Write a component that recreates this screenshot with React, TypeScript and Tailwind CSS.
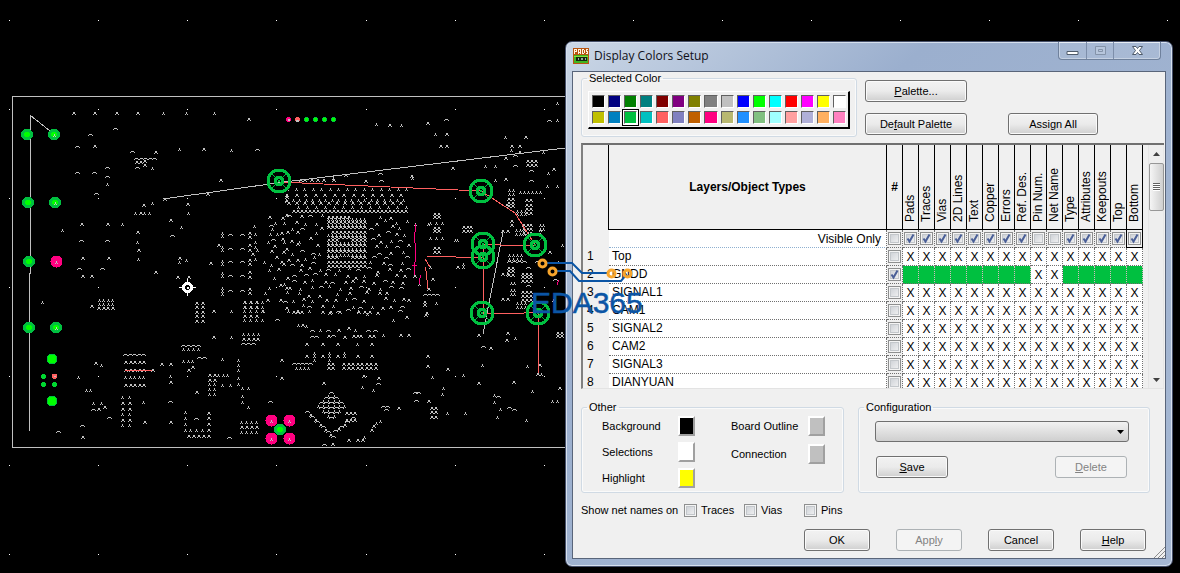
import React from "react";

type Kind = "full" | "thin" | "flat";

const px = (x: number, y: number, w = 1, h = 1) => `M${x} ${y}h${w}v${h}h${-w}z`;

const glyph: Record<Kind, (x: number, y: number) => string> = {
  full: (x, y) => px(x, y - 1, 2, 2) + px(x - 1, y + 1) + px(x + 2, y + 1),
  thin: (x, y) => px(x, y - 1, 1, 2) + px(x - 1, y + 1) + px(x + 1, y + 1),
  flat: (x, y) => px(x - 1, y - 1, 3, 1) + px(x - 2, y) + px(x + 2, y),
};

const plot = (kind: Kind, points: string) =>
  points
    .trim()
    .split(/\s+/)
    .map((p) => {
      const [x, y] = p.split(",").map(Number);
      return glyph[kind](x, y);
    })
    .join("");

const grid = (kind: Kind, xs: number[], ys: number[]) =>
  ys.flatMap((y) => xs.map((x) => glyph[kind](x, y))).join("");

const steps = (from: number, to: number, step: number) => {
  const out: number[] = [];
  for (let v = from; v <= to; v += step) out.push(Math.round(v));
  return out;
};

const FULL = `73,113 94,113 116,113 137,113 248,119 94,146 155,152 136,162 140,162 144,161 144,165 203,149 220,180 207,194
164,199 143,205 187,204 140,213 170,220 81,224 107,224 137,232 138,250 82,258 108,258 179,258 210,263 281,233 218,245
274,246 286,249 252,254 281,262 286,197 286,201 286,215 82,276 91,276 155,272 177,277 188,277 280,285 286,288 286,308
280,300 267,300 91,306 213,311 262,311 213,337 95,363 161,364 170,364 170,382 152,370 188,370 192,367 281,360 281,378
196,392 104,407 98,409 82,437 144,422 170,422 389,125 427,123 446,134 440,146 446,146 525,137 511,146 519,146 519,152
505,158 553,169 505,179 365,181 323,383 363,376 378,378 302,325 338,330 348,328 344,337 353,336 357,336
360,336 328,336 369,336 373,336 400,335 408,335 306,344 322,344 337,344 371,344 306,356 322,356 337,356 357,356 371,356
427,356 427,366 447,369 428,401 398,408 478,383 507,333 506,340 490,348 478,335 539,365 537,374 559,388 513,382 348,440
357,440 362,440 332,444 408,300 406,317 424,302 424,305 426,313 425,315 414,276 432,279 428,289 457,267 371,430 373,426
411,176 345,175 452,168 506,205 549,252 553,300`;

const THIN = `163,113 186,113 214,113 152,168 179,149 231,150 107,184 152,203 188,213 181,227 122,224 62,230 137,242
138,259 179,262 186,260 255,234 270,234 255,242 268,242 284,242 255,247 257,250 255,259 264,262 254,226 269,270 269,288
265,293 42,302 231,311 231,337 101,365 183,361 188,361 192,361 222,359 222,385 230,385 242,388 248,388 242,396 242,402
248,407 78,377 86,390 90,390 93,403 101,403 143,402 376,124 401,125 435,134 557,103 557,120 505,137 511,150 543,152
485,166 495,166 548,173 547,186 557,186 495,180 412,178 333,178 298,325 306,326 320,330 355,330 383,335 357,344 344,353
344,356 432,377 463,375 443,388 442,394 362,387 373,390 482,365 515,338 527,366 532,391 500,409 497,417 526,420 552,401
557,401 447,413 465,413 393,320 436,303 419,284 430,267 463,264 463,267 457,240 455,240 415,224 428,224 494,395 494,402
364,437 376,423 380,421 541,374 170,376 562,245 558,262`;

const FLAT = `115,129 90,135 77,147 132,152 137,168 257,150 107,168 77,173 94,173 107,177 96,194 172,236 81,241 107,241
79,269 102,269 271,226 277,320 199,358 204,358 270,402 170,402 109,418 82,426 58,432 196,419 229,438 93,410 446,120
549,121 515,156 515,166 531,171 531,181 380,174 381,181 312,331 328,331 368,331 375,331 312,337 316,337 333,336
378,384 415,393 418,393 416,401 383,407 387,407 386,410 483,347 498,397 509,408 514,410 324,445 537,262 555,280`;

function chipField() {
  const out: string[] = [];
  const kinds: Kind[] = ["thin", "full", "flat", "full"];
  const hash = (a: number, b: number) => {
    const v = Math.sin(a * 127.1 + b * 311.7) * 43758.5453;
    return v - Math.floor(v);
  };
  for (let r = 0; r < 17; r++) {
    const y = 216 + r * 6;
    const left = 271 + (y > 262 ? (y - 262) * 0.35 : 0);
    for (let c = 0; c < 14; c++) {
      const x = Math.round(left + c * 10 + (r % 2) * 5 + hash(r, c) * 4 - 2);
      if (x > 408 || (x > 322 && x < 370 && y < 268)) continue;
      if (hash(c, r + 40) < 0.1) continue;
      out.push(glyph[kinds[Math.floor(hash(r + 9, c + 5) * 4)]](x, y + Math.round(hash(c + 3, r) * 4) - 2));
    }
  }
  return out.join("");
}

function diamond() {
  const out: string[] = [];
  for (let i = 0; i < 6; i++)
    for (let j = 0; j < 6; j++)
      out.push(glyph[(i + j) % 2 ? "thin" : "flat"](331 + Math.round((i - j) * 2.6), 393 + Math.round((i + j) * 2.5)));
  return out.join("");
}

function chain(x1: number, y1: number, x2: number, y2: number, n: number) {
  return Array.from({ length: n }, (_, i) =>
    glyph[i % 2 ? "full" : "flat"](
      Math.round(x1 + ((x2 - x1) * i) / (n - 1)),
      Math.round(y1 + ((y2 - y1) * i) / (n - 1))
    )
  ).join("");
}

const MARKS = [
  plot("full", FULL),
  plot("thin", THIN),
  plot("flat", FLAT),
  grid("flat", steps(136, 154, 4.5), [159]),
  grid("thin", [135, 144, 149], [213]),
  grid("thin", [222], [233, 236, 247, 250, 261, 264, 273, 276, 288, 291, 294]),
  grid("full", [249], [233, 237, 245, 250, 260, 264, 272, 277, 289, 293]),
  grid("flat", [230, 242], [235, 249, 262, 276, 291]),
  grid("thin", [99, 103, 108, 112], [300, 304]),
  grid("full", [98, 103, 107, 112], [308]),
  grid("full", [196, 202], [303, 307, 312, 316, 321]),
  grid("full", [244, 250, 256], [302, 307, 316]),
  grid("thin", [244, 250, 256, 262], [302, 307, 311, 320]),
  grid("thin", [243, 248, 253, 258], [334]),
  grid("full", [243, 248, 253, 257], [339]),
  grid("flat", [243, 248, 253], [344]),
  grid("flat", [183, 188, 193, 198], [346]),
  grid("thin", [183, 188, 193, 198], [349]),
  grid("thin", [238], [360, 365, 370, 378, 384]),
  grid("flat", steps(125, 144, 4.5), [355]),
  grid("full", steps(125, 144, 4.5), [362, 370, 385]),
  grid("thin", steps(125, 144, 4.5), [377]),
  grid("full", [209, 214], [375, 380]),
  grid("thin", [209, 214], [384, 389, 394]),
  grid("thin", [218, 223, 227], [375]),
  grid("full", [122, 129], [403, 409, 420]),
  grid("thin", [122, 129], [397, 414, 425]),
  grid("thin", [185], [412, 418, 424, 430]),
  grid("full", [208], [413, 418, 424, 430, 436]),
  grid("thin", [190, 196, 202], [430]),
  grid("full", [188, 193, 198, 203], [436]),
  grid("thin", [241, 246, 251, 256], [422, 432]),
  grid("full", [241, 246, 251, 256], [427]),
  grid("flat", steps(294, 311, 4), [364]),
  grid("thin", steps(296, 308, 4), [368]),
  grid("full", [328, 332], [364, 368]),
  grid("thin", [314, 329], [353, 356, 360]),
  grid("full", steps(343, 377, 4.5), [364, 368]),
  grid("full", [431, 435], [408, 412, 417]),
  grid("full", [557, 561], [333, 336]),
  grid("flat", steps(425, 438, 4), [295]),
  grid("thin", steps(287, 406, 8.5), [189]),
  grid("full", steps(286, 405, 9.5), [195]),
  grid("thin", steps(286, 405, 6.5), [200]),
  grid("full", steps(288, 405, 8), [203]),
  grid("thin", steps(298, 406, 9), [207]),
  grid("full", steps(293, 406, 4), [211]),
  grid("full", [300, 304, 311, 317, 323, 333], [180]),
  grid("full", steps(328, 350, 4), [217, 222, 227]),
  grid("full", steps(332, 366, 4), [222, 227, 232, 237]),
  grid("thin", steps(328, 366, 4), [219, 225, 235, 243, 249, 255]),
  grid("full", steps(328, 366, 4), [245, 251, 262, 266]),
  grid("full", [328, 332, 336, 352, 356, 360, 364], [240, 257]),
  grid("full", [434, 438], [214, 217, 228, 231, 248, 252]),
  grid("thin", [430, 436, 442], [223, 238]),
  grid("full", [463, 467, 470], [227, 231]),
  grid("full", [527, 531, 535], [161, 165]),
  grid("thin", [509, 513], [190, 194]),
  grid("thin", steps(520, 541, 4), [192]),
  grid("full", [508, 512], [199, 203, 206]),
  grid("full", [526, 530], [200, 205, 209, 213]),
  grid("thin", [517, 521, 525], [211, 214]),
  grid("full", [511], [221, 225]),
  grid("full", [523, 527, 530], [225, 229, 233]),
  grid("thin", [516, 520, 524, 540], [230, 234]),
  grid("thin", [540, 543], [225, 229]),
  grid("full", [502, 507], [231]),
  grid("flat", [509, 514, 519, 524], [262]),
  grid("thin", [509, 513, 517, 521], [255, 259]),
  grid("full", [508, 512], [268, 271, 275]),
  grid("full", [522, 526, 530], [274, 277, 281]),
  grid("flat", [528], [268, 286]),
  grid("full", [502, 507], [274, 299]),
  grid("thin", [511, 514], [283, 290, 294]),
  grid("full", [522, 526, 530], [292, 296, 300]),
  grid("thin", [517, 521, 525], [303, 307]),
  grid("full", [293, 297, 301, 322, 330, 339, 358, 364, 369], [312]),
  chipField(),
  diamond(),
  chain(307, 412, 333, 437, 11),
  chain(335, 431, 353, 418, 7),
  grid("full", [346, 350, 354], [413, 420]),
].join("");

const DOTS = [20, 109, 198, 287, 376, 465, 554]
  .flatMap((y) => [9, 98, 187, 276, 366, 455, 544, 633, 722, 811, 900, 989, 1078, 1167].map((x) => px(x, y)))
  .join("");

const RINGS = [
  [279, 181],
  [481, 191],
  [483, 244],
  [483, 257],
  [535, 245],
  [482, 313],
  [538, 313],
];

const PADS = [
  [27, 134],
  [54, 134],
  [28, 202],
  [55, 202],
  [29, 261],
  [29, 327],
  [56, 327],
  [280, 429],
];

const PINK_PADS = [
  [56, 261],
  [271, 420],
  [289, 420],
  [271, 438],
  [289, 438],
];

function Board() {
  return (
    <svg className="absolute inset-0 h-full w-full" shapeRendering="crispEdges" aria-hidden="true">
      <path d="M565 96.5H12.5V447.5H565" fill="none" stroke="#c0c0c0" />
      <path d={MARKS} fill="#c0c0c0" />
      <path d={DOTS} fill="#ffffff" />
      <g fill="none" stroke="#c0c0c0">
        <path d="M50 131L30.5 115.5V273L29.5 274V431" />
        <path d="M163 199L284 182L565 148" />
        <path d="M503 232L483 334" />
      </g>
      <g fill="none" stroke="#ff6060">
        <path d="M280 182L345 185L481 191L515 213L535 245" />
        <path d="M483 244.5H501M501 245.5H535M427 256L484 258M483.5 244V313M482 313.5H510L538 312.5M538.5 313V373M425.5 267L428 289M425 259L430 267" />
        <path d="M125 370.5H152" />
      </g>
      <path d="M415.5 224V232M414.5 232V243M415.5 243V262M414.5 262V275M420.5 275L419 284M412 265h5M558.5 280L557 285" fill="none" stroke="#ff0080" />
      {RINGS.map(([x, y]) => (
        <g key={`${x}-${y}`} fill="none" stroke="#00c040">
          <circle cx={x} cy={y} r="11" strokeWidth="3" />
          <circle cx={x} cy={y} r="4" strokeWidth="3" />
          <path d={`M${x - 8} ${y - 8}l16 16M${x + 8} ${y - 8}l-16 16`} />
        </g>
      ))}
      {PADS.map(([x, y]) => (
        <g key={`${x}-${y}`}>
          <circle cx={x} cy={y + 0.5} r="6" fill="#00c040" />
          <circle cx={x} cy={y + 0.5} r="3" fill="#00ff00" />
        </g>
      ))}
      {PINK_PADS.map(([x, y]) => (
        <circle key={`${x}-${y}`} cx={x + 0.5} cy={y + 0.5} r="6" fill="#ff0080" />
      ))}
      {[359, 401].map((y) => (
        <circle key={y} cx="52" cy={y} r="5" fill="#00ff00" stroke="#00c040" />
      ))}
      <path d="M42 374h3v1h1v3h-1v1h-3v-1h-1v-3h1zM42 382h3v1h1v3h-1v1h-3v-1h-1v-3h1zM53 382h3v1h1v3h-1v1h-3v-1h-1v-3h1z" fill="#00d830" />
      <path d="M52 374h5v4h-1v1h-3v-1h-1z" fill="#ff6060" />
      {["#ff0080", "#ff6060", "#00c040", "#00c040", "#00c040", "#00c040"].map((c, i) => (
        <path key={i} d={`M${287 + i * 9} 117h3v1h1v3h-1v1h-3v-1h-1v-3h1z`} fill={c} />
      ))}
      <path d="M305 118h3v3h-3zM314 118h3v3h-3zM323 118h3v3h-3zM332 118h3v3h-3z" fill="#00ff00" />
      <path
        d={plot("thin", "54,135 55,203 56,262 56,328 271,421 289,421 271,439 289,439") + px(288, 119, 2, 2) + px(296, 120, 3, 2) + px(54, 376, 2, 1)}
        fill="#c0c0c0"
      />
      <circle cx="187.5" cy="287.5" r="4" fill="none" stroke="#ffffff" strokeWidth="3" />
      <path d="M187.5 279v5M187.5 291v5M179 287.5h5M191 287.5h5M187 287h1v1h-1z" stroke="#ffffff" />
    </svg>
  );
}

function Watermark() {
  return (
    <svg className="pointer-events-none absolute inset-0 h-full w-full" aria-hidden="true">
      <g fill="none" stroke="#0b55a5" strokeWidth="2">
        <path d="M546 263H572L582 273H608" />
        <path d="M556 271H570L579 281H621L626 275" />
      </g>
      <g fill="none" stroke="#f7a52c" strokeWidth="3">
        <circle cx="542.5" cy="263.5" r="3.500" />
        <circle cx="552.5" cy="271.5" r="3.500" />
        <circle cx="611.5" cy="273.5" r="3.500" />
        <circle cx="627.5" cy="273.5" r="3.500" />
      </g>
      <text x="531" y="313" fontFamily="'Liberation Sans', Arial, sans-serif" fontSize="30" fill="#0b55a5" stroke="#0b55a5" strokeWidth="0.5">
        EDA365
      </text>
    </svg>
  );
}

function Check({ label, id, checked = false, focus = false }: { label?: string; id?: string; checked?: boolean; focus?: boolean }) {
  return (
    <span className="relative block size-[13px] shrink-0">
      <input
        id={id}
        type="checkbox"
        aria-label={label}
        defaultChecked={checked}
        className="peer block size-[13px] appearance-none border border-[#8e8f8f] bg-linear-to-br from-[#c8ccd2] to-[#f6f6f6] shadow-[inset_0_0_0_1px_#f4f4f4,inset_0_0_0_2px_#c3c7cb]"
      />
      <svg viewBox="0 0 13 13" className="pointer-events-none absolute inset-0 hidden size-[13px] peer-checked:block" aria-hidden="true">
        <path d="M3.500 6.500L5.500 9.500L9.500 2.500" fill="none" stroke="#4a5f97" strokeWidth="2" />
      </svg>
      {focus && <span className="pointer-events-none absolute -inset-x-[2px] -inset-y-[3px] border border-black" />}
    </span>
  );
}

function Button({ children, className = "", disabled = false }: { children: React.ReactNode; className?: string; disabled?: boolean }) {
  const tone = disabled
    ? "border-[#adb2b5] bg-[#f4f4f4] text-[#838383]"
    : "border-[#707070] bg-linear-to-b from-[#f2f2f2] from-0% via-[#ebebeb] via-50% to-[#cfcfcf] text-black shadow-[inset_0_0_0_1px_#fafafa]";
  return (
    <button type="button" disabled={disabled} className={`h-[22px] shrink-0 rounded-[3px] border text-center leading-[18px] ${tone} ${className}`}>
      {children}
    </button>
  );
}

const PALETTE = [
  "#000000", "#000080", "#008000", "#008080", "#800000", "#800080", "#808000", "#808080",
  "#c0c0c0", "#0000ff", "#00ff00", "#00ffff", "#ff0000", "#ff00ff", "#ffff00", "#ffffff",
  "#c0c000", "#0080c0", "#00c040", "#00c0c0", "#ff6060", "#8080c0", "#c06000", "#ff0080",
  "#b8b870", "#2090ff", "#80c080", "#a0ffff", "#ffa0a0", "#b0b0d8", "#ffb060", "#ff80c0",
];

const COLUMNS = [
  "Pads", "Traces", "Vias", "2D Lines", "Text", "Copper", "Errors", "Ref. Des.",
  "Pin Num.", "Net Name", "Type", "Attributes", "Keepouts", "Top", "Bottom",
];

const LAYERS = ["Top", "GNDD", "SIGNAL1", "CAM1", "SIGNAL2", "CAM2", "SIGNAL3", "DIANYUAN"];

const hiddenColumn = (i: number) => i === 8 || i === 9;

function Group({ title, className = "", children }: { title: string; className?: string; children: React.ReactNode }) {
  return (
    <fieldset className={`min-w-0 rounded-[3px] border border-[#d0dae4] shadow-[inset_0_0_0_1px_#fafafa] ${className}`}>
      <legend className="ml-[5px] px-[2px] leading-[12px]">{title}</legend>
      {children}
    </fieldset>
  );
}

function ColorRow({ label, color }: { label: string; color: string }) {
  return (
    <div className="flex h-[26px] items-center justify-between">
      <span>{label}</span>
      <button
        type="button"
        aria-label={label}
        className={`h-5 w-[17px] border-t-2 border-r-2 border-b-2 border-l-2 border-t-white border-r-[#a0a0a0] border-b-[#a0a0a0] border-l-white ${color}`}
      />
    </div>
  );
}

function LayerTable() {
  return (
    <div className="mt-[6px] flex h-[246px] overflow-hidden border-t-2 border-l-2 border-t-[#707070] border-l-[#808080] border-b border-b-[#e3e3e3] bg-[#f0f0f0]">
      <div className="min-w-0 flex-1 overflow-hidden">
        <table className="w-full table-fixed border-separate border-spacing-0 bg-white text-[12px] leading-[14px]">
          <colgroup>
            <col className="w-[26px]" />
            <col />
            <col className="w-4" />
            {COLUMNS.map((c) => (
              <col key={c} className="w-4" />
            ))}
          </colgroup>
          <thead>
            <tr className="h-[84px] bg-[#f0f0f0]">
              <th className="border-r border-black" />
              <th className="border-r border-b border-black text-center font-bold">Layers/Object Types</th>
              <th className="border-r border-b border-black text-center font-bold">#</th>
              {COLUMNS.map((c) => (
                <th key={c} className="border-r border-b border-black p-0 align-bottom font-normal">
                  <span className="block h-[84px] w-[15px] rotate-180 pt-[7px] text-left leading-[15px] whitespace-nowrap [writing-mode:vertical-rl]">{c}</span>
                </th>
              ))}
            </tr>
          </thead>
          <tbody>
            <tr className="h-[18px]">
              <td className="bg-[#f0f0f0] p-0" />
              <td className="border-r border-b border-dotted border-r-[#707070] border-b-[#8fb0d0] p-0 pr-[5px] text-right">Visible Only</td>
              <td className="border-r border-b border-dotted border-[#707070] bg-[#f0f0f0] p-0">
                <span className="flex justify-center">
                  <Check label="Visible only, all" />
                </span>
              </td>
              {COLUMNS.map((c, i) => (
                <td key={c} className="border-r border-b border-dotted border-[#707070] bg-[#f0f0f0] p-0">
                  <span className="flex justify-center">
                    <Check label={`Visible only, ${c}`} checked={!hiddenColumn(i)} focus={c === "Bottom"} />
                  </span>
                </td>
              ))}
            </tr>
            {LAYERS.map((layer, row) => (
              <tr key={layer} className="h-[18px]">
                <td className="bg-[#f0f0f0] p-0 pb-[2px] pl-1 text-left">{row + 1}</td>
                <td className="border-r border-b border-dotted border-[#707070] p-0 pb-px pl-[3px] text-left">{layer}</td>
                <td className="border-r border-b border-dotted border-[#707070] bg-[#f0f0f0] p-0">
                  <span className="flex justify-center">
                    <Check label={layer} checked={row === 1} />
                  </span>
                </td>
                {COLUMNS.map((c, i) => {
                  const filled = row === 1 && !hiddenColumn(i);
                  return (
                    <td
                      key={c}
                      className={`border-r border-b border-dotted p-0 text-center ${filled ? "border-r-[#d8b8c0] border-b-[#707070] bg-[#00c040]" : "border-[#707070] bg-white"}`}
                    >
                      {filled ? "" : "X"}
                    </td>
                  );
                })}
              </tr>
            ))}
          </tbody>
        </table>
      </div>
      <div className="ml-[5px] flex w-4 shrink-0 flex-col items-center border-x border-[#e6e6e6] bg-[#eeeeee]">
        <svg className="h-[18px] w-[7px] shrink-0" viewBox="0 0 7 18" aria-hidden="true">
          <path d="M0 11L3.500 7L7 11z" fill="#404040" />
        </svg>
        <div className="flex h-[48px] w-[15px] shrink-0 flex-col items-center justify-center rounded-[2px] border border-[#979797] bg-linear-to-r from-[#f5f5f5] to-[#cfcfcf]">
          <span className="h-[2px] w-[7px] border-b border-white bg-[#606060]" />
          <span className="h-[2px] w-[7px] border-b border-white bg-[#606060]" />
          <span className="h-[2px] w-[7px] border-b border-white bg-[#606060]" />
          <span className="h-[2px] w-[7px] border-b border-white bg-[#606060]" />
        </div>
        <svg className="mt-auto h-[17px] w-[7px] shrink-0" viewBox="0 0 7 17" aria-hidden="true">
          <path d="M0 7h7L3.500 11z" fill="#404040" />
        </svg>
      </div>
    </div>
  );
}

function AppIcon() {
  return (
    <svg className="size-4" viewBox="0 0 16 16" shapeRendering="crispEdges" aria-hidden="true">
      <path d="M0 0h16v16H0z" fill="#b85410" />
      <path
        d="M1.500 1v5M1 1.500h2M1 3.500h2M3.500 1v3M5.500 2v4M7.500 2v4M5 1.500h3M5 4.500h3M9.500 1v5M9 1.500h2M9 5.500h2M11.500 2v3M13 1.500h2M13 3.500h2M13 5.500h2M13.500 1v3M14.500 3v3"
        stroke="#fff4e0"
        fill="none"
      />
      <path d="M1 7h14v8H1z" fill="#3fb520" />
      <path d="M1 8h14v1H1z" fill="#8be03c" />
      <path d="M3 9h11v4H3z" fill="#14280c" />
      <path d="M5 10h1v2H5zM8 10h2v2H8zM12 10h1v2h-1z" fill="#9aa6a0" />
    </svg>
  );
}

function TitleBar() {
  return (
    <header className="flex h-[29px] items-start px-[5px]">
      <div className="-ml-[5px] mt-[6px] flex items-center gap-[5px] pl-[1px]">
        <AppIcon />
        <h1 className="font-['Open_Sans','Noto_Sans',sans-serif] text-[12px] leading-4 text-[#101018]">Display Colors Setup</h1>
      </div>
      <div className="ml-auto flex h-[18px] rounded-b-[4px] border border-t-0 border-[#6f819c] bg-white/10 shadow-[inset_0_0_0_1px_rgba(255,255,255,0.35)]">
        <button type="button" aria-label="Minimize" className="flex w-[28px] items-center justify-center border-r border-[#7d8eaa]">
          <svg className="h-[13px] w-[13px]" viewBox="0 0 13 13" aria-hidden="true">
            <path d="M1 7.500h11v3H1z" fill="#ffffff" stroke="#4f5b6b" />
          </svg>
        </button>
        <button type="button" aria-label="Maximize" disabled className="flex w-[27px] items-center justify-center border-r border-[#7d8eaa]">
          <svg className="h-[13px] w-[13px]" viewBox="0 0 13 13" aria-hidden="true">
            <path d="M1.500 2.500h10v8h-10zM4.500 5.500h4v2h-4z" fill="#c2cfe1" fillOpacity="0.600" stroke="#8493a9" />
          </svg>
        </button>
        <button type="button" aria-label="Close" className="flex w-[46px] items-center justify-center">
          <svg className="h-[13px] w-[13px]" viewBox="0 0 13 13" aria-hidden="true">
            <path d="M1.500 2.500h3.500l1.500 2l1.500-2h3.500l-3 4l3 4H8l-1.500-2l-1.500 2H1.500l3-4z" fill="#ffffff" stroke="#4f5b6b" />
          </svg>
        </button>
      </div>
    </header>
  );
}

function NetName({ id, label }: { id: string; label: string }) {
  return (
    <div className="flex w-[60px] items-center gap-1">
      <Check id={id} />
      <label htmlFor={id}>{label}</label>
    </div>
  );
}

export default function App() {
  return (
    <main className="relative flex min-h-screen items-start justify-end overflow-hidden bg-black pt-[41px] pr-[7px] pb-1 font-['Liberation_Sans',Arial,sans-serif] text-[11px] text-black">
      <Board />
      <section
        aria-label="Display Colors Setup"
        className="relative w-[608px] max-w-full rounded-[7px] border border-[#46506a] bg-linear-to-br from-[#cbd7e6] from-0% via-[#9bafce] via-30% to-[#a6b8d3] px-[6px] pb-[7px] shadow-[inset_0_0_0_1px_#d6e0ee]"
      >
        <TitleBar />
        <div className="relative border border-[#59657a] bg-[#f0f0f0] pr-px pb-[7px] pl-2">
          <div className="flex">
            <Group title="Selected Color" className="h-[65px] w-[276px]">
              <div className="mx-[6px] mt-[7px] grid grid-cols-16 gap-x-[3px] gap-y-[3px] border-t border-r-2 border-b-2 border-l border-t-white border-r-black border-b-black border-l-white py-[3px] pr-[2px] pl-[3px]">
                {PALETTE.map((c, i) => (
                  <button
                    key={i}
                    type="button"
                    aria-label={c}
                    className={`h-[13px] border-t border-l border-r border-b border-t-[#606060] border-l-[#606060] border-r-white border-b-white ${i === 18 ? "shadow-[0_0_0_1px_#fff,0_0_0_2px_#000]" : ""}`}
                    style={{ backgroundColor: c }}
                  />
                ))}
              </div>
            </Group>
            <div className="ml-2 flex flex-col gap-[11px] pt-2">
              <Button className="w-[102px]">
                <u>P</u>alette...
              </Button>
              <Button className="w-[102px]">
                De<u>f</u>ault Palette
              </Button>
            </div>
            <Button className="mt-[41px] ml-[41px] w-[90px]">Assign All</Button>
          </div>

          <LayerTable />

          <div className="mt-3 flex gap-[14px] pr-[14px]">
            <Group title="Other" className="h-[92px] w-[263px]">
              <div className="flex gap-9 pr-[18px] pl-5">
                <div className="w-[93px]">
                  <ColorRow label="Background" color="bg-black" />
                  <ColorRow label="Selections" color="bg-white" />
                  <ColorRow label="Highlight" color="bg-[#ffff00]" />
                </div>
                <div className="w-[94px] space-y-[2px]">
                  <ColorRow label="Board Outline" color="bg-[#c0c0c0]" />
                  <ColorRow label="Connection" color="bg-[#c0c0c0]" />
                </div>
              </div>
            </Group>
            <Group title="Configuration" className="h-[92px] flex-1">
              <div className="px-4">
                <div className="relative mt-2 pr-1">
                  <select
                    aria-label="Configuration"
                    defaultValue=""
                    className="block h-[21px] w-full appearance-none rounded-[3px] border border-[#707070] bg-linear-to-b from-[#f2f2f2] to-[#cfcfcf] px-2"
                  >
                    <option value=""></option>
                  </select>
                  <svg className="pointer-events-none absolute top-[9px] right-[9px] h-1 w-[7px]" viewBox="0 0 7 4" aria-hidden="true">
                    <path d="M0 0h7L3.500 4z" fill="#000000" />
                  </svg>
                </div>
                <div className="mt-[14px] flex justify-between pr-[6px] pl-px">
                  <Button className="w-[72px]">
                    <u>S</u>ave
                  </Button>
                  <Button disabled className="w-[72px]">
                    <u>D</u>elete
                  </Button>
                </div>
              </div>
            </Group>
          </div>

          <div className="mt-[10px] flex h-[14px] items-center leading-[14px]">
            <span className="w-[103px] whitespace-nowrap">Show net names on</span>
            <NetName id="net-traces" label="Traces" />
            <NetName id="net-vias" label="Vias" />
            <NetName id="net-pins" label="Pins" />
          </div>

          <div className="mt-3 flex justify-end gap-[26px] pr-[18px]">
            <Button className="w-[66px]">OK</Button>
            <Button disabled className="w-[66px]">
              App<u>l</u>y
            </Button>
            <Button className="w-[66px]">Cancel</Button>
            <Button className="w-[66px]">
              <u>H</u>elp
            </Button>
          </div>
          <svg className="absolute right-0 bottom-0 size-3" viewBox="0 0 12 12" aria-hidden="true">
            <path d="M1 12L12 1M5 12L12 5M9 12L12 9" stroke="#8c8c8c" fill="none" />
          </svg>
        </div>
      </section>
      <Watermark />
    </main>
  );
}
